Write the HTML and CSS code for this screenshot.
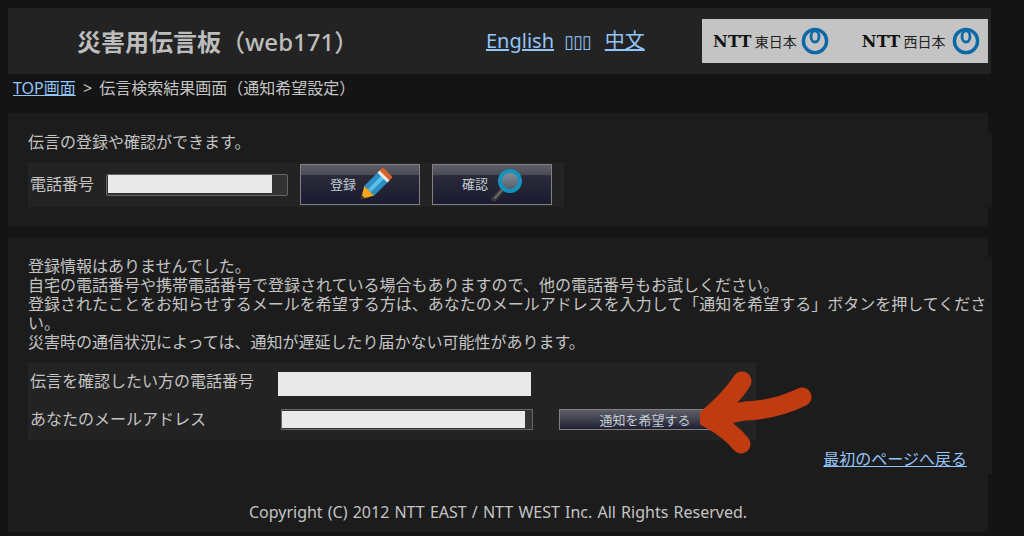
FILE: index.html
```html
<!DOCTYPE html>
<html lang="ja">
<head>
    <meta charset="UTF-8">
    <meta name="viewport" content="width=device-width, initial-scale=1.0">
    <title>災害用伝言板（web171）</title>
    <link rel="stylesheet" href="styles.css">
</head>
<body>
<div id="wrapper">
    <div id="header">
        <h1 class="site-title"><b>災害用伝言板</b>（web171）</h1>
        <div class="lang-links">
            <a href="#">English</a>
            <a href="#" class="tofu">▯▯▯</a>
            <a href="#">中文</a>
        </div>
        <div class="ntt-logo">
            <div class="ntt-item">
                <span class="ntt-mark">NTT</span><span class="ntt-name">東日本</span>
                <svg width="28" height="28" viewBox="0 0 28 28"><circle cx="14" cy="14" r="11.6" fill="none" stroke="#0c69a6" stroke-width="3.4"/><ellipse cx="14" cy="9.4" rx="4" ry="5.6" fill="none" stroke="#0c69a6" stroke-width="2.8"/></svg>
            </div>
            <div class="ntt-item">
                <span class="ntt-mark">NTT</span><span class="ntt-name">西日本</span>
                <svg width="28" height="28" viewBox="0 0 28 28"><circle cx="14" cy="14" r="11.6" fill="none" stroke="#0c69a6" stroke-width="3.4"/><ellipse cx="14" cy="9.4" rx="4" ry="5.6" fill="none" stroke="#0c69a6" stroke-width="2.8"/></svg>
            </div>
        </div>
    </div>

    <div class="breadcrumb"><a href="#">TOP画面</a> &gt; 伝言検索結果画面（通知希望設定）</div>

    <div class="panel panel-search">
        <div class="panel-body">
            <p>伝言の登録や確認ができます。</p>
            <div class="search-row">
                <label class="search-label">電話番号</label>
                <div class="field field-search"><input type="text" class="field-input"></div>
                <button class="big-btn">
                    <span>登録</span>
                    <svg width="34" height="34" viewBox="0 0 34 34">
                        <g transform="rotate(45 17 17)">
                            <path d="M17 37 L10 25 H24 Z" fill="#f2a51e"/>
                            <path d="M17 37 L15 33.5 H19 Z" fill="#2a2a2a"/>
                            <rect x="10" y="6" width="14" height="19" fill="#2b8fc4"/>
                            <rect x="15" y="6" width="4" height="19" fill="#5cc0e8"/>
                            <rect x="10" y="3" width="14" height="3.5" fill="#e8e8e8"/>
                            <rect x="10" y="-1" width="14" height="4.5" rx="1" fill="#d9622a"/>
                        </g>
                    </svg>
                </button>
                <button class="big-btn">
                    <span>確認</span>
                    <svg width="34" height="34" viewBox="0 0 34 34">
                        <defs>
                            <linearGradient id="lens" x1="0" y1="0" x2="0" y2="1">
                                <stop offset="0" stop-color="#8d939c"/>
                                <stop offset="1" stop-color="#4d5a68"/>
                            </linearGradient>
                        </defs>
                        <path d="M12 22 L4 31" stroke="#3c3c3c" stroke-width="5" stroke-linecap="round"/>
                        <path d="M12 22 L5 30" stroke="#777" stroke-width="1.4" stroke-linecap="round"/>
                        <circle cx="20" cy="13" r="10" fill="url(#lens)" stroke="#1592bb" stroke-width="4"/>
                    </svg>
                </button>
            </div>
        </div>
    </div>

    <div class="panel panel-result">
        <div class="panel-body">
            <p>登録情報はありませんでした。<br>
            自宅の電話番号や携帯電話番号で登録されている場合もありますので、他の電話番号もお試しください。<br>
            登録されたことをお知らせするメールを希望する方は、あなたのメールアドレスを入力して「通知を希望する」ボタンを押してください。<br>
            災害時の通信状況によっては、通知が遅延したり届かない可能性があります。</p>
            <div class="notify-form">
                <div class="notify-row notify-row-first">
                    <label class="notify-label">伝言を確認したい方の電話番号</label>
                    <input type="text" class="plain-input">
                </div>
                <div class="notify-row">
                    <label class="notify-label">あなたのメールアドレス</label>
                    <div class="field field-mail"><input type="text" class="field-input"></div>
                    <button class="small-btn">通知を希望する</button>
                </div>
            </div>
            <div class="back-link"><a href="#">最初のページへ戻る</a></div>
        </div>
        <div class="copyright">Copyright (C) 2012 NTT EAST / NTT WEST Inc. All Rights Reserved.</div>
    </div>
</div>

<svg class="red-arrow" width="130" height="90" viewBox="700 370 130 90">
    <g fill="none" stroke="#c03c10" stroke-width="19" stroke-linecap="round" stroke-linejoin="round">
        <path d="M802 397 Q775 410 745 411 L708 418"/>
        <path d="M742 381 Q733 396 708 418"/>
        <path d="M708 418 Q730 430 741 444"/>
    </g>
</svg>
</body>
</html>
```
FILE: styles.css
```css
* {
    box-sizing: border-box;
}

body {
    margin: 0;
    padding: 8px 0 4px 8px;
    background-color: #141414;
    color: #c4c4c4;
    font-family: "Noto Sans", "Noto Sans CJK JP", sans-serif;
    font-size: 16px;
    line-height: 19px;
    overflow: hidden;
}

a {
    color: #93c4fa;
}

p {
    margin: 0;
}

#wrapper {
    width: 984px;
}

/* header */
#header {
    display: flex;
    align-items: center;
    width: 983px;
    height: 66px;
    background-color: #232323;
}

.site-title {
    width: 478px;
    margin: 0;
    padding-left: 69px;
    font-size: 24px;
    font-weight: 500;
    color: #bdbdbd;
}

.site-title b {
    font-weight: 700;
}

.lang-links {
    display: flex;
    align-items: baseline;
    gap: 13px;
    width: 216px;
    font-size: 20px;
    line-height: 27px;
}

.tofu {
    margin-left: -3px;
    margin-right: 1px;
    font-family: "DejaVu Sans", sans-serif;
    font-size: 18px;
    letter-spacing: -1px;
}

.ntt-logo {
    display: flex;
    gap: 33px;
    width: 286px;
    height: 44px;
    padding-left: 11px;
    background-color: #c4c4c4;
}

.ntt-item {
    display: flex;
    flex: none;
    align-items: center;
    color: #222;
}

.ntt-mark {
    font-family: "DejaVu Serif", serif;
    font-size: 16px;
    font-weight: 700;
    letter-spacing: 0.3px;
    color: #111;
}

.ntt-name {
    margin-left: 3px;
    margin-right: 4px;
    font-size: 14px;
}

.ntt-item:last-child .ntt-name {
    margin-right: 6px;
}

.breadcrumb {
    padding: 5px 0 15px 5px;
    word-spacing: 3px;
}

/* panels */
.panel {
    width: 980px;
    padding-top: 20px;
    background-color: #1c1c1c;
}

.panel-body {
    width: 984px;
    padding-left: 20px;
    background-color: #1c1c1c;
}

.panel-search {
    padding-bottom: 20px;
    margin-bottom: 10px;
}

.search-row {
    display: flex;
    align-items: center;
    width: 536px;
    height: 45px;
    margin-top: 10px;
    background-color: #232323;
}

.search-label {
    width: 78px;
    padding-left: 2px;
}

.field {
    border: 1px solid #666;
    border-radius: 2px;
    background-color: #333;
}

.field-input {
    display: block;
    border: 0;
    padding: 0;
    background-color: #e8e9e8;
}

.field-search {
    width: 182px;
    height: 22px;
    padding-left: 1px;
    margin-right: 12px;
}

.field-search .field-input {
    width: 164px;
    height: 18px;
}

.big-btn {
    display: flex;
    align-items: center;
    gap: 2px;
    width: 120px;
    height: 41px;
    margin-right: 12px;
    padding: 0 0 0 29px;
    border: 1px solid #808080;
    background: linear-gradient(#5e5e68, #4a4a54 26%, #2a2a3a 27%, #1b1b30 100%);
    color: #c4ccd4;
    font-family: inherit;
    font-size: 13px;
}

.big-btn span {
    margin-bottom: 3px;
}

.notify-form {
    width: 728px;
    height: 78px;
    margin-top: 10px;
    padding: 10px 0 0 2px;
    background-color: #232323;
}

.notify-row {
    display: flex;
    align-items: center;
    height: 21px;
}

.notify-row-first {
    align-items: flex-start;
    height: 24px;
    margin-bottom: 13px;
}

.notify-label {
    width: 248px;
}

.plain-input {
    width: 253px;
    height: 24px;
    border: 0;
    padding: 0;
    background-color: #e8e9e8;
}

.notify-row .field-mail {
    width: 252px;
    height: 21px;
    margin-left: 3px;
    margin-right: 26px;
    border-radius: 0;
    padding: 1px 0 1px 0;
}

.field-mail .field-input {
    width: 243px;
    height: 17px;
}

.small-btn {
    width: 172px;
    height: 21px;
    padding: 0;
    border: 1px solid #808080;
    background: linear-gradient(#5e5e68, #454552 45%, #1e1e32 100%);
    color: #c4ccd4;
    font-family: inherit;
    font-size: 13px;
}

.back-link {
    width: 939px;
    height: 34px;
    padding-top: 10px;
    text-align: right;
}

.copyright {
    padding: 29px 0 10px;
    text-align: center;
    word-spacing: 1px;
}

/* hand drawn arrow over the form */
.red-arrow {
    position: absolute;
    left: 700px;
    top: 370px;
}
```
